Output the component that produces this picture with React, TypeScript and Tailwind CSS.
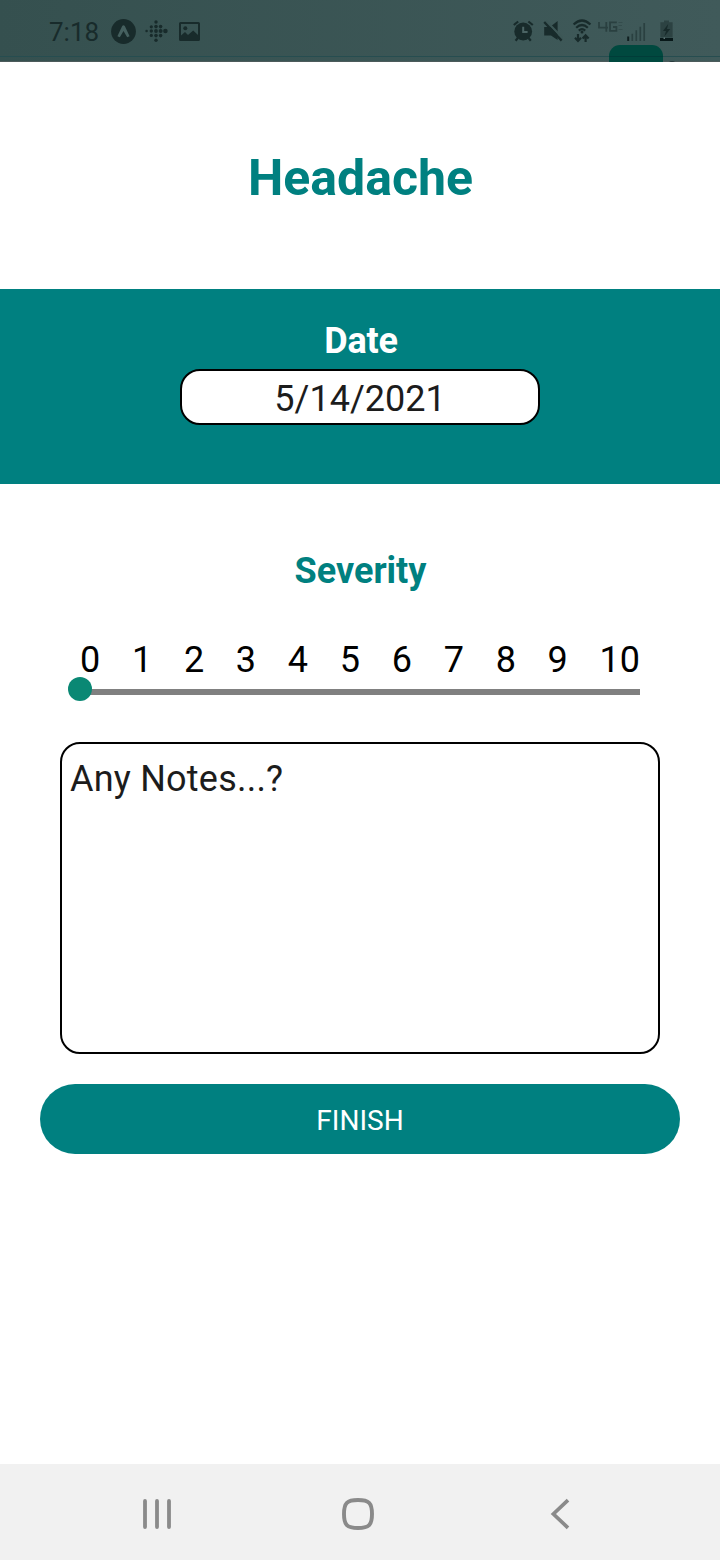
import type { ReactNode } from "react";

const levels = [0, 1, 2, 3, 4, 5, 6, 7, 8, 9, 10];

const fitbitDots: [number, number, number][] = [
  [1.6, 11, 1.3],
  [6.3, 6.8, 1.6], [6.3, 11, 1.7], [6.3, 15.4, 1.6],
  [11, 2, 1.7], [11, 6.6, 1.8], [11, 11, 1.9], [11, 15.6, 1.8], [11, 20.2, 1.7],
  [15.6, 6.6, 1.8], [15.6, 11, 2], [15.6, 15.6, 1.8],
  [20.4, 11, 2.3],
];

function StatusBar() {
  return (
    <header className="relative flex h-[62px] shrink-0 items-start overflow-hidden bg-linear-to-r from-[#35504f] to-[#405a5a] text-[#182b2b]">
      <div className="absolute inset-x-0 top-[56px] h-px bg-[#264d50]" />
      <div className="absolute inset-x-0 top-[61px] h-px bg-[#4c5b5b]" />
      <div className="absolute left-[609px] top-[45px] h-[30px] w-[54px] rounded-[11px] bg-[#00493f]" />
      <div className="absolute left-[609px] top-[56px] h-px w-[54px] bg-[#003d39]" />
      <div className="absolute left-[668px] top-[61px] size-[8px] rounded-full bg-[#26393b]" />

      <span className="ml-[49px] mt-[17px] w-[51px] whitespace-nowrap text-[26px] leading-[30px]">7:18</span>

      <svg className="ml-[11px] mt-[19px] size-[25px]" viewBox="0 0 25 25">
        <circle cx="12.5" cy="12.5" r="12.4" fill="currentColor" />
        <path d="M6.4 17.2 L11.2 7 Q12.5 5.4 13.8 7 L18.6 17.2 L16.2 18.2 L12.5 12 L8.8 18.2 Z" fill="#45605f" />
      </svg>

      <svg className="ml-[9px] mt-[20px] h-[23px] w-[23px]" viewBox="0 0 23 23" fill="currentColor">
        {fitbitDots.map(([x, y, r]) => (
          <circle key={`${x}-${y}`} cx={x} cy={y} r={r} />
        ))}
      </svg>

      <svg className="ml-[11px] mt-[22px] h-[19px] w-[21px]" viewBox="0 0 21 19">
        <path
          fill="currentColor"
          fillRule="evenodd"
          d="M1.6 0H19.4Q21 0 21 1.6V17.4Q21 19 19.4 19H1.6Q0 19 0 17.4V1.6Q0 0 1.6 0ZM2 2V13.5L6 10L9 13L14.2 8.5L19 13V2Z"
        />
        <circle cx="6.3" cy="6.2" r="2" fill="currentColor" />
      </svg>

      <svg className="ml-[313px] mt-[20px] h-[22px] w-[21px]" viewBox="0 0 21 22" fill="none" stroke="currentColor">
        <circle cx="10.2" cy="11.5" r="8.9" fill="currentColor" stroke="none" />
        <path d="M0.8 5 5.2 1.5M19.8 5 15.4 1.5" strokeWidth="2.2" />
        <path d="M4.8 18 2.6 20.8M15.6 18 17.8 20.8" strokeWidth="2.2" />
        <path d="M10.2 6.7V12H14.6" stroke="#4b6464" strokeWidth="2" />
      </svg>

      <svg className="ml-[9px] mt-[20px] h-[22px] w-[20px]" viewBox="0 0 20 22">
        <path d="M1.2 7H7L14.6 1V20L8 15.5H1.2Z" fill="currentColor" />
        <path d="M3.2 1 20 18.4" stroke="#3c5655" strokeWidth="2.2" />
        <path d="M1.2 2 18.6 20.6" stroke="currentColor" strokeWidth="2.3" />
      </svg>

      <svg className="ml-[9px] mt-[19px] h-[24px] w-[20px]" viewBox="0 0 20 24" fill="none" stroke="currentColor" strokeWidth="2.2">
        <path d="M1.6 5.5Q10 -2.5 18.4 5.5M4.2 8.7Q10 3.3 15.8 8.7M6.8 11.6Q10 8.8 13.2 11.6" />
        <circle cx="10" cy="13" r="1.5" fill="currentColor" stroke="none" />
        <path d="M6 15V22M3 18.8 6 22 9 18.8M13.6 23V16.5M10.6 19.6 13.6 16.4 16.6 19.6" />
      </svg>

      <svg className="ml-[6px] mt-[21px] h-[12px] w-[25px] text-[#2a4040]" viewBox="0 0 25 12" fill="none" stroke="currentColor" strokeWidth="1.8">
        <path d="M1 1V6.6H10M8.3 1V10.8M18.8 1.4H12V9.8H18.4V6H15" />
        <path d="M20.5 1.5H24.5M20.5 4.5H24M20.5 8.5H24.5" strokeWidth="1.2" opacity=".5" />
      </svg>

      <svg className="ml-[4px] mt-[22px] h-[20px] w-[19px]" viewBox="0 0 19 20" fill="none" stroke="#263b3b" strokeWidth="1.7">
        <path d="M1.2 14.5V19" stroke="#101f20" strokeWidth="2" />
        <path d="M5.3 11.8V19M9.3 8.2V19M13.3 4.7V19M17.2 1V19" opacity=".8" />
      </svg>

      <svg className="ml-[14px] mt-[20px] h-[22px] w-[13px]" viewBox="0 0 13 22">
        <path d="M4 0.5H9V2.2H12.6V17.5H0.4V2.2H4Z" fill="#2c4242" />
        <path d="M8.2 4 3 11H6L4.4 16.5 10.2 9H7Z" fill="#172a2a" />
        <path d="M0 18H13V21H0Z" fill="#081819" />
        <circle cx="4.2" cy="18.3" r=".7" fill="#7f9696" />
      </svg>
    </header>
  );
}

function NavButton({ label, children, className }: { label: string; children: ReactNode; className: string }) {
  return (
    <button aria-label={label} className={className}>
      {children}
    </button>
  );
}

function NavigationBar() {
  return (
    <nav className="flex h-24 shrink-0 items-start bg-[#f1f1f1] pt-[34px] text-[#8a8a8a]">
      <NavButton label="Recent apps" className="ml-[142px]">
        <svg className="h-8 w-[30px]" viewBox="0 0 30 32" fill="none" stroke="currentColor" strokeWidth="3.8" strokeLinecap="round">
          <path d="M3 3V29M15 3V29M27 3V29" />
        </svg>
      </NavButton>
      <NavButton label="Home" className="ml-[170px]">
        <svg className="size-8" viewBox="0 0 32 32" fill="none" stroke="currentColor" strokeWidth="3.9">
          <path d="M16 2C27 2 30 5 30 16S27 30 16 30 2 27 2 16 5 2 16 2Z" />
        </svg>
      </NavButton>
      <NavButton label="Back" className="ml-[176px]">
        <svg className="h-8 w-[20px]" viewBox="0 0 20 32" fill="none" stroke="currentColor" strokeWidth="3.7">
          <path d="M18 2.2 3.4 16 18 29.8" />
        </svg>
      </NavButton>
    </nav>
  );
}

export default function App() {
  return (
    <div className="flex h-[1560px] w-[720px] flex-col overflow-hidden bg-white font-['Roboto',sans-serif] text-black">
      <StatusBar />

      <div className="flex h-[227px] shrink-0 items-center justify-center pt-[5px]">
        <h1 className="pl-px text-[50px] font-bold leading-[60px] text-[#008080]">Headache</h1>
      </div>

      <section className="flex h-[195px] shrink-0 flex-col items-center bg-[#008080] pt-[31px]">
        <h2 className="pl-[2px] text-[36px] font-bold leading-[42px] tracking-[-0.2px] text-white">Date</h2>
        <div className="mt-[7px] flex h-14 w-[360px] items-center justify-center rounded-[20px] border-2 border-black bg-white pt-[3px] text-[36px] leading-[42px] text-[#1c1c1c]">
          5/14/2021
        </div>
      </section>

      <main className="flex flex-1 flex-col items-center">
        <h2 className="mt-[66px] pl-px text-[36px] font-bold leading-[42px] text-[#008080]">Severity</h2>

        <div className="mt-[47px] flex w-[560px] justify-between text-[36px] leading-[42px]">
          {levels.map((level) => (
            <span key={level}>{level}</span>
          ))}
        </div>
        <div className="mt-[8px] h-[6px] w-[560px] bg-[#808080]">
          <div className="-ml-3 size-6 -translate-y-3 rounded-full bg-[#0a8874]" />
        </div>

        <div className="mt-[47px] h-[312px] w-[600px] rounded-[20px] border-2 border-black px-2 pt-[14px] text-[36px] leading-[42px] tracking-[0.22px] text-[#1c1c1c]">
          Any Notes...?
        </div>

        <button className="mt-[30px] h-[70px] w-[640px] rounded-full bg-[#008080] pt-[3px] text-[28px] leading-[33px] text-white">
          FINISH
        </button>
      </main>

      <NavigationBar />
    </div>
  );
}
